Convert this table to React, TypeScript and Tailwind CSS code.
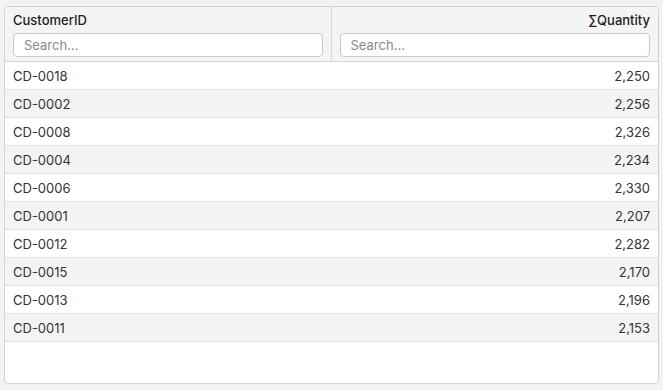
const rows: [string, string][] = [
  ["CD-0018", "2,250"],
  ["CD-0002", "2,256"],
  ["CD-0008", "2,326"],
  ["CD-0004", "2,234"],
  ["CD-0006", "2,330"],
  ["CD-0001", "2,207"],
  ["CD-0012", "2,282"],
  ["CD-0015", "2,170"],
  ["CD-0013", "2,196"],
  ["CD-0011", "2,153"],
];

export default function App() {
  return (
    <div className="w-[663px] h-[390px] bg-[#f3f3f3] px-[4px] pt-[6px] pb-[6px] font-['Inter',sans-serif] text-[13px]">
      <div className="h-full bg-white border border-[#d4d4d4] rounded-[4px] overflow-hidden flex flex-col">
        {/* header */}
        <div className="grid grid-cols-2 bg-[#f4f4f4] border-b border-[#d4d4d4] h-[55px]">
          <div className="border-r border-[#d9d9d9] px-[8px] pt-[5px] flex flex-col gap-[5px]">
            <span className="font-medium text-[#222] leading-[16px]">CustomerID</span>
            <input
              placeholder="Search..."
              className="h-[24px] w-full rounded-[4px] border border-[#c8c8c8] bg-white px-[10px] text-[13px] text-[#333] placeholder:text-[#8a8a8a] outline-none"
            />
          </div>
          <div className="px-[8px] pt-[5px] flex flex-col gap-[5px]">
            <span className="font-medium text-[#222] leading-[16px] text-right">∑Quantity</span>
            <input
              placeholder="Search..."
              className="h-[24px] w-full rounded-[4px] border border-[#c8c8c8] bg-white px-[10px] text-[13px] text-[#333] placeholder:text-[#8a8a8a] outline-none"
            />
          </div>
        </div>

        {/* rows */}
        <div className="flex-1">
          {rows.map(([id, qty], i) => (
            <div
              key={id}
              className={`h-[28px] flex items-center justify-between px-[8px] pt-[2px] border-b border-[#e2e2e2] text-[#333] ${i % 2 ? "bg-[#f4f4f4]" : "bg-white"}`}
            >
              <span>{id}</span>
              <span>{qty}</span>
            </div>
          ))}
        </div>
      </div>
    </div>
  );
}
